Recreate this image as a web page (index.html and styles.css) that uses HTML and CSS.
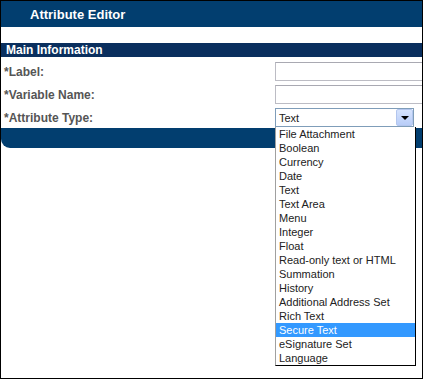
FILE: index.html
```html
<!DOCTYPE html>
<html lang="en">
<head>
  <meta charset="UTF-8" />
  <title>Attribute Editor</title>
  <link rel="stylesheet" href="styles.css">
</head>
<body>
  <div class="frame">
    <header class="title-bar">Attribute Editor</header>

    <div class="section-bar">Main Information</div>

    <div class="form">
      <label class="field-label" for="label">*Label:</label>
      <input class="field-input" id="label" type="text">

      <label class="field-label" for="varname">*Variable Name:</label>
      <input class="field-input" id="varname" type="text">

      <label class="field-label">*Attribute Type:</label>
      <div class="select-wrap">
        <div class="select">
          <span class="select-value">Text</span>
          <span class="select-arrow"></span>
        </div>

        <!-- open dropdown list -->
        <ul class="options">
          <li>File Attachment</li>
          <li>Boolean</li>
          <li>Currency</li>
          <li>Date</li>
          <li>Text</li>
          <li>Text Area</li>
          <li>Menu</li>
          <li>Integer</li>
          <li>Float</li>
          <li>Read-only text or HTML</li>
          <li>Summation</li>
          <li>History</li>
          <li>Additional Address Set</li>
          <li>Rich Text</li>
          <li class="selected">Secure Text</li>
          <li>eSignature Set</li>
          <li>Language</li>
        </ul>
      </div>
    </div>

    <div class="bottom-bar"></div>
  </div>
</body>
</html>
```

FILE: styles.css
```css
* {
  box-sizing: border-box;
}

body {
  margin: 0;
  background: #fff;
  font-family: Tahoma, "Liberation Sans", Arial, sans-serif;
}

.frame {
  position: relative;
  width: 423px;
  height: 379px;
  border: 1px solid #000;
  overflow: hidden;
  background: #fff;
}

.title-bar {
  height: 26px;
  line-height: 27px;
  padding-left: 29px;
  background: #023e6f;
  color: #fff;
  font-size: 13px;
  font-weight: bold;
}

.section-bar {
  margin-top: 16px;
  height: 14px;
  line-height: 15px;
  padding-left: 5px;
  background: #0a2f5e;
  color: #fff;
  font-size: 12px;
  font-weight: bold;
}

.form {
  display: grid;
  grid-template-columns: 274px 1fr;
  grid-auto-rows: 19px;
  row-gap: 4px;
  margin-top: 5px;
}

.field-label {
  padding-left: 3px;
  line-height: 20px;
  color: #555;
  font-size: 12px;
  font-weight: bold;
}

.field-input {
  width: 160px;
  height: 19px;
  margin: 0;
  border: 1px solid #bcbcc4;
  border-top-color: #a9a9b2;
  background: #fff;
}

.select-wrap {
  position: relative;
}

.select {
  display: flex;
  align-items: center;
  justify-content: space-between;
  width: 139px;
  height: 19px;
  border: 1px solid #7f9db9;
  background: #fff;
}

.select-value {
  padding-left: 3px;
  color: #222;
  font-size: 11px;
}

.select-arrow {
  position: relative;
  width: 17px;
  height: 17px;
  border: 1px solid #b3c6ee;
  border-radius: 2px;
  background: linear-gradient(#d6e3fd, #b8cdf8);
}

.select-arrow::after {
  content: "";
  position: absolute;
  left: 4px;
  top: 6px;
  border-left: 4px solid transparent;
  border-right: 4px solid transparent;
  border-top: 4px solid #000;
}

.options {
  position: absolute;
  top: 19px;
  left: 0;
  z-index: 2;
  width: 141px;
  margin: 0;
  padding: 0;
  list-style: none;
  border: 1px solid #000;
  border-left-color: #a0a0a0;
  border-top: none;
  background: #fff;
}

.options li {
  height: 14px;
  line-height: 15px;
  padding-left: 3px;
  color: #222;
  font-size: 11px;
  white-space: nowrap;
}

.options li.selected {
  background: #3399ff;
  color: #fff;
}

.bottom-bar {
  height: 20px;
  margin-top: 1px;
  background: #023e6f;
  border-bottom-left-radius: 9px;
}
```
